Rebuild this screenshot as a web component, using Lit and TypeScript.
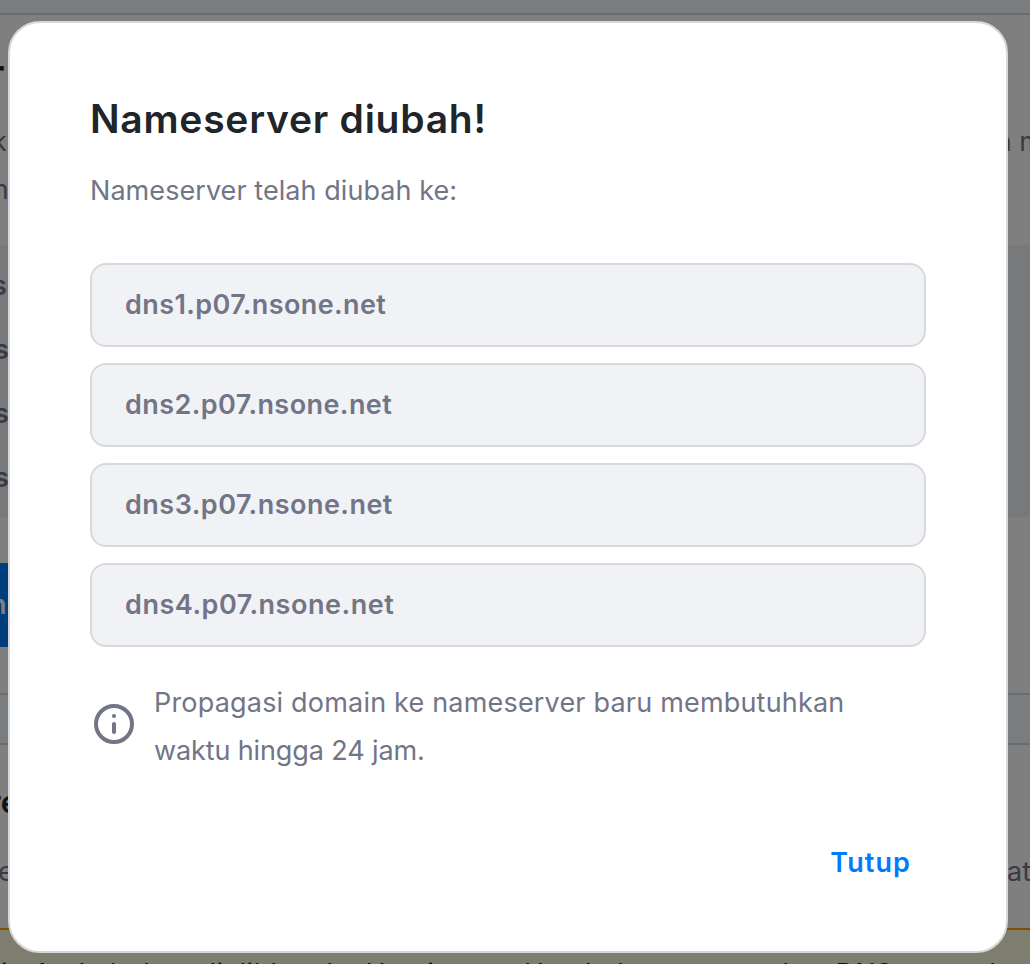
import { LitElement, html, css } from "lit";

const servers = [
  { name: "dns1.p07.nsone.net", spacing: 0.4 },
  { name: "dns2.p07.nsone.net", spacing: 0.43 },
  { name: "dns3.p07.nsone.net", spacing: 0.48 },
  { name: "dns4.p07.nsone.net", spacing: 0.53 },
];

class PageBackdrop extends LitElement {
  static styles = css`
    :host {
      display: flex;
      flex-direction: column;
      height: 964px;
      overflow: hidden;
      background: #fff;
      color: #727586;
      font: 400 27px/48px Inter, sans-serif;
      white-space: nowrap;
    }
    .strip {
      box-sizing: border-box;
      flex: none;
      background: #f2faff;
      border-bottom: 2px solid #d8d8d8;
    }
    .top { height: 15px; }
    .mid { height: 52px; border-top: 2px solid #d8d8d8; }
    .section { flex: none; box-sizing: border-box; }
    .intro { height: 230px; padding-top: 34px; }
    .heading {
      color: #212529;
      font-size: 39px;
      font-weight: 600;
    }
    .line { display: flex; justify-content: space-between; height: 48px; }
    .intro .line:nth-child(2) { margin-top: 21px; }
    .cut-r { margin-left: -11px; }
    .cut-k { margin-left: -8px; }
    .cut-m { margin-left: -15px; }
    .cut-s { margin-left: -6px; }
    .cut-so { margin-left: -8px; }
    .cut-e { margin-left: -2px; }
    .cut-n { margin-left: -10px; }
    .tail-n { margin-right: -13px; }
    .tail-at { margin-right: -1px; }
    .list {
      height: 272px;
      padding-top: 9px;
      background: #f1f2f6;
      font-weight: 600;
      line-height: 64px;
    }
    .list .line { height: 64px; }
    .action { height: 176px; padding-top: 46px; }
    .button {
      width: 300px;
      height: 84px;
      background: #007bff;
      color: #fff;
      font-weight: 600;
      line-height: 84px;
    }
    .second { height: 183px; padding-top: 33px; }
    .second .heading { font-size: 31px; }
    .second .line:nth-child(2) { margin-top: 22px; }
    .alert {
      flex: 1;
      background: #fff8e1;
      border-top: 2px solid #ffa000;
      color: #212529;
      padding: 20px 0 0 1px;
      letter-spacing: 0.6px;
    }
    .alert span { margin-left: 14px; letter-spacing: 0; }
  `;

  render() {
    return html`
      <div class="strip top"></div>
      <div class="section intro">
        <div class="line heading"><span class="cut-r">r</span></div>
        <div class="line"><span class="cut-k">k</span><span class="tail-n">n m</span></div>
        <div class="line"><span class="cut-m">m</span></div>
      </div>
      <div class="section list">
        <div class="line"><span class="cut-so">so</span></div>
        <div class="line"><span class="cut-s">s</span></div>
        <div class="line"><span class="cut-s">s</span></div>
        <div class="line"><span class="cut-s">s</span></div>
      </div>
      <div class="section action">
        <div class="button"><span class="cut-n">ns</span></div>
      </div>
      <div class="strip mid"></div>
      <div class="section second">
        <div class="line heading"><span class="cut-r">re</span></div>
        <div class="line"><span class="cut-e">e</span><span class="tail-at">at</span></div>
      </div>
      <div class="alert">
        in Anda belum dialihkan ke Hostinger.
        <span>Untuk da menggunakan DNS server kami</span>
      </div>
    `;
  }
}
customElements.define("page-backdrop", PageBackdrop);

class AppRoot extends LitElement {
  static styles = css`
    :host {
      display: block;
      position: relative;
      height: 964px;
      overflow: hidden;
      font-family: Inter, sans-serif;
    }
    .overlay {
      position: absolute;
      inset: 0;
      padding: 21px 22px 0 8px;
      background: rgba(0, 0, 0, 0.5);
    }
    .modal {
      box-sizing: border-box;
      height: 932px;
      padding: 66px 80px 0;
      display: flex;
      flex-direction: column;
      background: #fff;
      border: 2px solid #d6d7d9;
      border-radius: 32px;
      color: #727586;
      font-size: 27px;
      line-height: 48px;
    }
    h1 {
      margin: 0;
      height: 60px;
      color: #212529;
      font-size: 39px;
      font-weight: 600;
      line-height: 60px;
      letter-spacing: 0.75px;
    }
    p { margin: 0; }
    .lead { margin-top: 18px; letter-spacing: 0.06px; }
    .servers {
      display: grid;
      gap: 16px;
      margin-top: 48px;
    }
    .server {
      box-sizing: border-box;
      height: 84px;
      padding: 0 33px;
      border: 2px solid #d8d9db;
      border-radius: 16px;
      background: #f1f2f6;
      font-weight: 600;
      line-height: 80px;
    }
    .note {
      display: flex;
      align-items: flex-start;
      margin-top: 32px;
    }
    .note svg { flex: none; width: 48px; height: 48px; margin: 21px 16px 0 0; }
    .note p { letter-spacing: 0.19px; }
    .note .last { display: block; letter-spacing: -0.12px; }
    button {
      align-self: flex-end;
      margin: 48px 0 0;
      padding: 0 15px;
      height: 80px;
      border: 0;
      background: none;
      color: #007bff;
      font: 600 27px/80px Inter, sans-serif;
      letter-spacing: 1.1px;
    }
  `;

  render() {
    return html`
      <page-backdrop></page-backdrop>
      <div class="overlay">
        <div class="modal" role="dialog">
          <h1>Nameserver diubah!</h1>
          <p class="lead">Nameserver telah diubah ke:</p>
          <div class="servers">
            ${servers.map(
              (s) => html`<div class="server" style="letter-spacing:${s.spacing}px">${s.name}</div>`
            )}
          </div>
          <div class="note">
            <svg viewBox="0 0 48 48" fill="none" stroke="#727586" stroke-width="4" stroke-linecap="round">
              <circle cx="24" cy="24" r="18" />
              <path d="M24 24v8" />
              <circle cx="24" cy="16" r="2.1" fill="#727586" stroke="none" />
            </svg>
            <p>
              Propagasi domain ke nameserver baru membutuhkan
              <span class="last">waktu hingga 24 jam.</span>
            </p>
          </div>
          <button>Tutup</button>
        </div>
      </div>
    `;
  }
}
customElements.define("app-root", AppRoot);
